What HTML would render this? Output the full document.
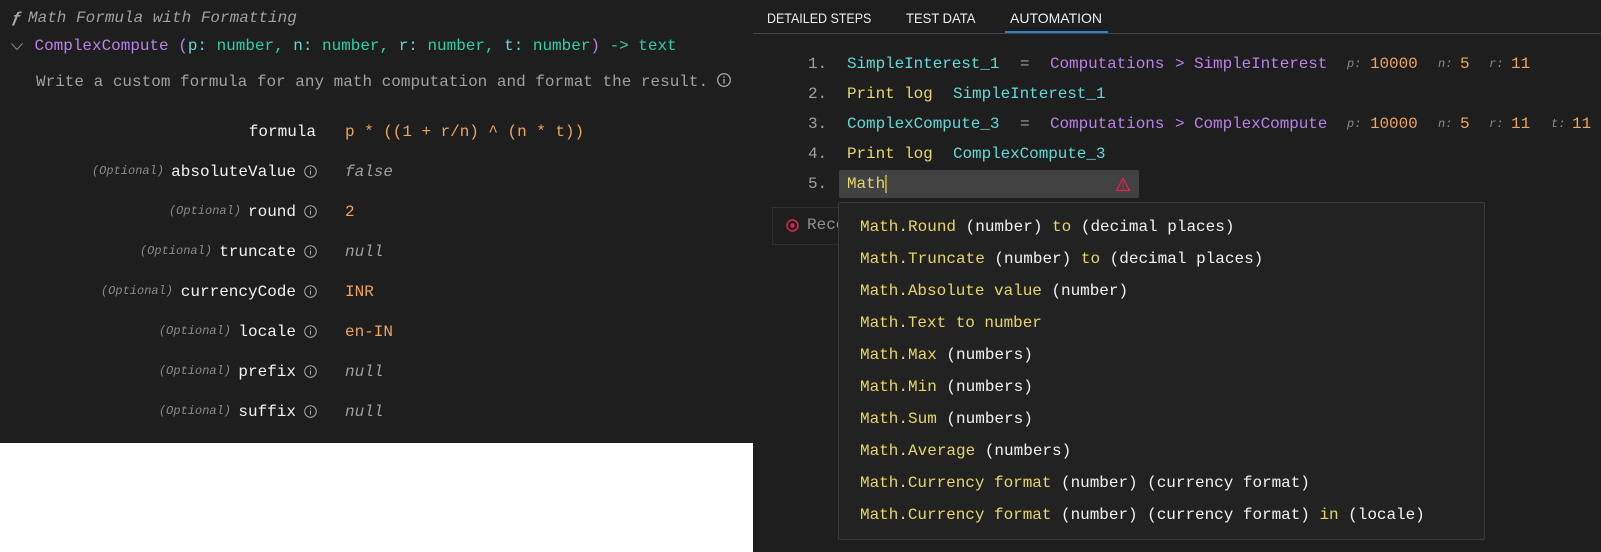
<!DOCTYPE html>
<html><head><meta charset="utf-8"><style>
html,body{margin:0;padding:0;width:1601px;height:552px;overflow:hidden;background:#1e1e1e}
body{position:relative;font-family:"Liberation Mono",monospace;font-size:16px;line-height:20px;color:#fff}
.t{position:absolute;white-space:pre;height:20px}
.tab{position:absolute;top:8px;font:14px/20px "Liberation Sans",sans-serif;color:#eee;white-space:pre;transform-origin:left center}
.o{position:absolute;white-space:pre;font-size:12px;font-style:italic;color:#8a8a8a;text-align:right;height:16px;line-height:16px}
.c{color:#62d9d6}.p{color:#b981e8}.y{color:#e6d667}.n{color:#eba560}.g{color:#a0a0a0}.w{color:#f2f2f2}.s{color:#2ad0a8}.i{color:#62d9d6}
.sm{font-size:12px;font-style:italic;color:#8a8a8a}
.l{letter-spacing:-.08px}
svg{position:absolute}
</style></head><body>
<div style="position:absolute;left:0;top:443px;width:753px;height:109px;background:#fff"></div>
<div style="position:absolute;left:753px;top:33px;width:848px;height:1px;background:#444"></div>
<div style="position:absolute;left:1005px;top:31px;width:103px;height:2px;background:#1f87d6"></div>

<div class="t" style="left:12px;top:8px;color:#aaa;font-style:italic"><b>&#402;</b></div>
<div class="t" style="left:28px;top:8px;color:#a0a0a0;font-style:italic">Math Formula with Formatting</div>
<svg style="left:10px;top:42px" width="14" height="10" viewBox="0 0 14 10"><path d="M1.5 1.5 L7 7.5 L12.5 1.5" fill="none" stroke="#888" stroke-width="1"/></svg>
<div class="t" style="left:34.5px;top:36px;letter-spacing:-.02px"><span class="p">ComplexCompute (</span><span class="i">p:</span> <span class="s">number,</span> <span class="i">n:</span> <span class="s">number,</span> <span class="i">r:</span> <span class="s">number,</span> <span class="i">t:</span> <span class="s">number</span><span class="p">)</span><span class="s"> -&gt; text</span></div>
<div class="t g" style="left:36px;top:72px">Write a custom formula for any math computation and format the result.</div>
<svg style="left:716px;top:72px" width="16" height="16" viewBox="0 0 16 16"><circle cx="8" cy="8" r="6.3" fill="none" stroke="#bbb" stroke-width="1.1"/><path d="M8 7v4.5M8 4.4v1.3" stroke="#bbb" stroke-width="1.2"/></svg>

<div class="t w" style="right:1285px;top:122px">formula</div>
<div class="t n" style="left:345px;top:122px;letter-spacing:-.04px">p * ((1 + r/n) ^ (n * t))</div>

<div class="o" style="right:1437px;top:163px">(Optional)</div>
<div class="t w" style="right:1305px;top:162px">absoluteValue</div>
<svg style="left:303px;top:164px" width="15" height="15" viewBox="0 0 15 15"><circle cx="7.5" cy="7.5" r="5.8" fill="none" stroke="#aaa"/><path d="M7.5 6.5v4M7.5 4.2v1.1" stroke="#aaa"/></svg>
<div class="t g" style="left:345px;top:162px;font-style:italic">false</div>

<div class="o" style="right:1360px;top:203px">(Optional)</div>
<div class="t w" style="right:1305px;top:202px">round</div>
<svg style="left:303px;top:204px" width="15" height="15" viewBox="0 0 15 15"><circle cx="7.5" cy="7.5" r="5.8" fill="none" stroke="#aaa"/><path d="M7.5 6.5v4M7.5 4.2v1.1" stroke="#aaa"/></svg>
<div class="t n" style="left:345px;top:202px">2</div>

<div class="o" style="right:1389px;top:243px">(Optional)</div>
<div class="t w" style="right:1305px;top:242px">truncate</div>
<svg style="left:303px;top:244px" width="15" height="15" viewBox="0 0 15 15"><circle cx="7.5" cy="7.5" r="5.8" fill="none" stroke="#aaa"/><path d="M7.5 6.5v4M7.5 4.2v1.1" stroke="#aaa"/></svg>
<div class="t g" style="left:345px;top:242px;font-style:italic">null</div>

<div class="o" style="right:1428px;top:283px">(Optional)</div>
<div class="t w" style="right:1305px;top:282px">currencyCode</div>
<svg style="left:303px;top:284px" width="15" height="15" viewBox="0 0 15 15"><circle cx="7.5" cy="7.5" r="5.8" fill="none" stroke="#aaa"/><path d="M7.5 6.5v4M7.5 4.2v1.1" stroke="#aaa"/></svg>
<div class="t n" style="left:345px;top:282px">INR</div>

<div class="o" style="right:1370px;top:323px">(Optional)</div>
<div class="t w" style="right:1305px;top:322px">locale</div>
<svg style="left:303px;top:324px" width="15" height="15" viewBox="0 0 15 15"><circle cx="7.5" cy="7.5" r="5.8" fill="none" stroke="#aaa"/><path d="M7.5 6.5v4M7.5 4.2v1.1" stroke="#aaa"/></svg>
<div class="t n" style="left:345px;top:322px">en-IN</div>

<div class="o" style="right:1370px;top:363px">(Optional)</div>
<div class="t w" style="right:1305px;top:362px">prefix</div>
<svg style="left:303px;top:364px" width="15" height="15" viewBox="0 0 15 15"><circle cx="7.5" cy="7.5" r="5.8" fill="none" stroke="#aaa"/><path d="M7.5 6.5v4M7.5 4.2v1.1" stroke="#aaa"/></svg>
<div class="t g" style="left:345px;top:362px;font-style:italic">null</div>

<div class="o" style="right:1370px;top:403px">(Optional)</div>
<div class="t w" style="right:1305px;top:402px">suffix</div>
<svg style="left:303px;top:404px" width="15" height="15" viewBox="0 0 15 15"><circle cx="7.5" cy="7.5" r="5.8" fill="none" stroke="#aaa"/><path d="M7.5 6.5v4M7.5 4.2v1.1" stroke="#aaa"/></svg>
<div class="t g" style="left:345px;top:402px;font-style:italic">null</div>

<div class="tab" style="left:767px;transform:scaleX(.89)">DETAILED STEPS</div>
<div class="tab" style="left:906px;transform:scaleX(.93)">TEST DATA</div>
<div class="tab" style="left:1010px">AUTOMATION</div>

<div class="t g l" style="left:808px;top:54px">1.</div>
<div class="t c l" style="left:847px;top:54px">SimpleInterest_1</div>
<div class="t g" style="left:1020px;top:54px">=</div>
<div class="t p l" style="left:1050px;top:54px">Computations</div>
<div class="t p" style="left:1175px;top:54px">&gt;</div>
<div class="t p l" style="left:1194px;top:54px">SimpleInterest</div>
<div class="t sm" style="left:1347px;top:54px">p:</div><div class="t n l" style="left:1370px;top:54px">10000</div>
<div class="t sm" style="left:1438px;top:54px">n:</div><div class="t n" style="left:1460px;top:54px">5</div>
<div class="t sm" style="left:1489px;top:54px">r:</div><div class="t n" style="left:1511px;top:54px">11</div>

<div class="t g l" style="left:808px;top:84px">2.</div>
<div class="t y l" style="left:847px;top:84px">Print log</div>
<div class="t c l" style="left:953px;top:84px">SimpleInterest_1</div>

<div class="t g l" style="left:808px;top:114px">3.</div>
<div class="t c l" style="left:847px;top:114px">ComplexCompute_3</div>
<div class="t g" style="left:1020px;top:114px">=</div>
<div class="t p l" style="left:1050px;top:114px">Computations</div>
<div class="t p" style="left:1175px;top:114px">&gt;</div>
<div class="t p l" style="left:1194px;top:114px">ComplexCompute</div>
<div class="t sm" style="left:1347px;top:114px">p:</div><div class="t n l" style="left:1370px;top:114px">10000</div>
<div class="t sm" style="left:1438px;top:114px">n:</div><div class="t n" style="left:1460px;top:114px">5</div>
<div class="t sm" style="left:1489px;top:114px">r:</div><div class="t n" style="left:1511px;top:114px">11</div>
<div class="t sm" style="left:1551px;top:114px">t:</div><div class="t n" style="left:1572px;top:114px">11</div>

<div class="t g l" style="left:808px;top:144px">4.</div>
<div class="t y l" style="left:847px;top:144px">Print log</div>
<div class="t c l" style="left:953px;top:144px">ComplexCompute_3</div>

<div class="t g l" style="left:808px;top:174px">5.</div>
<div style="position:absolute;left:839px;top:170px;width:300px;height:28px;background:#424242;border-radius:2px"></div>
<div class="t y l" style="left:847px;top:174px">Math</div>
<div style="position:absolute;left:885px;top:175px;width:2px;height:18px;background:#a89c4c"></div>
<svg style="left:1115px;top:177px" width="16" height="15" viewBox="0 0 16 15"><path d="M8 1.5 L14.5 13.5 H1.5 Z" fill="none" stroke="#e0264f" stroke-width="1.3"/><path d="M8 5.5v5M8 11.5v1" stroke="#e0264f" stroke-width="0.9"/></svg>

<div style="position:absolute;left:772px;top:207px;width:80px;height:36px;border:1px solid #2e2e2e"></div>
<svg style="left:785px;top:218px" width="15" height="15" viewBox="0 0 15 15"><circle cx="7.5" cy="7.5" r="5.5" fill="none" stroke="#e0264f" stroke-width="1.5"/><circle cx="7.5" cy="7.5" r="2.2" fill="#e0264f"/></svg>
<div class="t g" style="left:807px;top:215px;color:#8f8f8f">Record</div>

<div style="position:absolute;left:838px;top:202px;width:645px;height:336px;background:#222;border:1px solid #3a3a3a;border-radius:2px"></div>
<div class="t" style="left:860px;top:217px;color:#f2f2f2"><span class="y">Math.Round</span> (number) <span class="y">to</span> (decimal places)</div>
<div class="t" style="left:860px;top:249px;color:#f2f2f2"><span class="y">Math.Truncate</span> (number) <span class="y">to</span> (decimal places)</div>
<div class="t" style="left:860px;top:281px;color:#f2f2f2;letter-spacing:-.03px"><span class="y">Math.Absolute value</span> (number)</div>
<div class="t y" style="left:860px;top:313px;letter-spacing:-.03px">Math.Text to number</div>
<div class="t" style="left:860px;top:345px;color:#f2f2f2"><span class="y">Math.Max</span> (numbers)</div>
<div class="t" style="left:860px;top:377px;color:#f2f2f2"><span class="y">Math.Min</span> (numbers)</div>
<div class="t" style="left:860px;top:409px;color:#f2f2f2"><span class="y">Math.Sum</span> (numbers)</div>
<div class="t" style="left:860px;top:441px;color:#f2f2f2"><span class="y">Math.Average</span> (numbers)</div>
<div class="t" style="left:860px;top:473px;color:#f2f2f2;letter-spacing:-.03px"><span class="y">Math.Currency format</span> (number) (currency format)</div>
<div class="t" style="left:860px;top:505px;color:#f2f2f2;letter-spacing:-.03px"><span class="y">Math.Currency format</span> (number) (currency format) <span class="y">in</span> (locale)</div>
</body></html>
